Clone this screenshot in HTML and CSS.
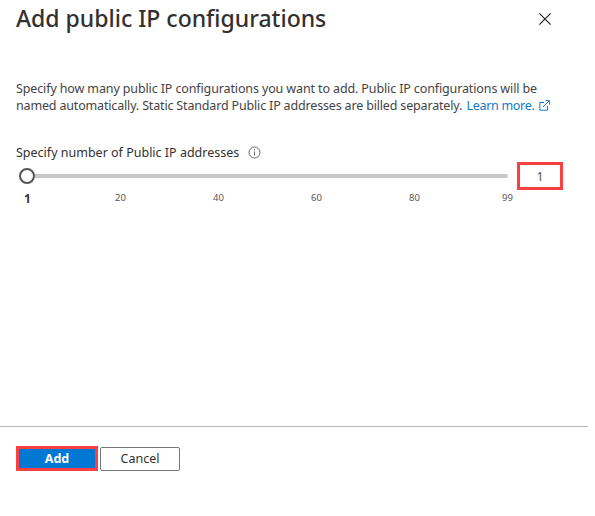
FILE: index.html
```html
<!DOCTYPE html>
<html lang="en">
<head>
<meta charset="utf-8">
<title>Add public IP configurations</title>
<link rel="stylesheet" href="styles.css">
</head>
<body>
<section class="panel">
  <header class="header">
    <h1 class="title">Add public IP configurations</h1>
    <button class="close" aria-label="Close">
      <svg width="12" height="12" viewBox="0 0 12 12"><path d="M.4 .4 11.6 11.6M11.6 .4 .4 11.6" fill="none" stroke="#222" stroke-width="1.2"/></svg>
    </button>
  </header>
  <main class="content">
    <p class="intro"><span class="line-one">Specify how many public IP configurations you want to add. Public IP configurations will be</span><br><span class="line-two">named automatically. Static Standard Public IP addresses are billed separately.</span> <a class="link">Learn more.<svg class="external" width="11" height="11" viewBox="0 0 11 11"><path d="M5 2.5H.8v7.7h7.7V6M6.5.6h3.9v3.9M10.2.8 4 7" fill="none" stroke="currentColor"/></svg></a></p>
    <div class="label"><span>Specify number of Public IP addresses</span><svg width="13" height="13" viewBox="0 0 13 13"><circle cx="6.5" cy="6.5" r="5.5" fill="none" stroke="#666" stroke-width="1"/><path d="M6.5 5.5v4M6.5 3.3v1.2" stroke="#666" stroke-width="1"/></svg></div>
    <div class="slider-row">
      <div class="slider">
        <div class="rail"><span class="thumb"></span><span class="track"></span></div>
        <div class="ticks"><span class="current">1</span><span>20</span><span>40</span><span>60</span><span>80</span><span>99</span></div>
      </div>
      <div class="value">1</div>
    </div>
  </main>
  <footer class="footer">
    <button class="button primary">Add</button>
    <button class="button">Cancel</button>
  </footer>
</section>
</body>
</html>
```

FILE: styles.css
```css
* { box-sizing: border-box; }
body {
  margin: 0;
  background: #fff;
  color: #323130;
  font: 12.5px/17px "Noto Sans", "Open Sans", sans-serif;
}
button { font: inherit; padding: 0; }
.panel {
  width: 588px;
  height: 516px;
  display: flex;
  flex-direction: column;
}
.header {
  display: flex;
  justify-content: space-between;
  height: 80px;
  padding: 2px 37px 0 16px;
}
.title {
  margin: 0;
  font-size: 23px;
  line-height: 32px;
  font-weight: 500;
  white-space: nowrap;
}
.close {
  display: flex;
  width: 12px;
  height: 12px;
  margin-top: 11px;
  border: 0;
  background: none;
}
.content {
  height: 346px;
  padding: 0 25px 0 16px;
}
.intro {
  margin: 0;
  white-space: nowrap;
  color: #444;
}
.line-one { letter-spacing: -0.125px; }
.line-two { letter-spacing: -0.165px; }
.link { margin-left: 1px; letter-spacing: -0.3px; color: #1478c8; }
.external { margin-left: 5px; vertical-align: -1px; }
.label {
  display: flex;
  align-items: center;
  gap: 9px;
  height: 17px;
  margin-top: 30px;
}
.slider-row {
  display: flex;
  justify-content: space-between;
  margin-top: 1px;
}
.slider { width: 500px; padding-left: 3px; }
.rail {
  display: flex;
  align-items: center;
  height: 28px;
}
.thumb {
  width: 16px;
  height: 16px;
  border: 2px solid #555;
  border-radius: 50%;
}
.track {
  width: 473px;
  height: 4px;
  border-radius: 0 2px 2px 0;
  background: #c8c8c8;
}
.ticks {
  display: grid;
  grid-template-columns: 93px 98px 98px 98px 93px 16px;
  margin-top: 1px;
  font-size: 9.5px;
  line-height: 14px;
  color: #555;
}
.ticks span { padding-left: 3px; }
.ticks .current { padding-left: 5px; line-height: 16px; font-size: 12px; font-weight: 700; color: #333; }
.value {
  width: 46px;
  height: 28px;
  border: 3px solid #fb4044;
  line-height: 23px;
  text-align: center;
  color: #555;
}
.footer {
  display: flex;
  gap: 2px;
  height: 90px;
  padding: 19px 16px;
  border-top: 1px solid #b5b5b5;
}
.button {
  width: 80px;
  height: 24px;
  margin-top: 1px;
  border: 1px solid #777;
  border-radius: 2px;
  background: #fff;
  color: #323130;
  line-height: 20px;
}
.button.primary {
  width: 82px;
  height: 25px;
  margin-top: 0;
  border: 3px solid #fb4044;
  border-radius: 0;
  background: #0078d4;
  color: #fff;
  font-weight: 700;
}
```
